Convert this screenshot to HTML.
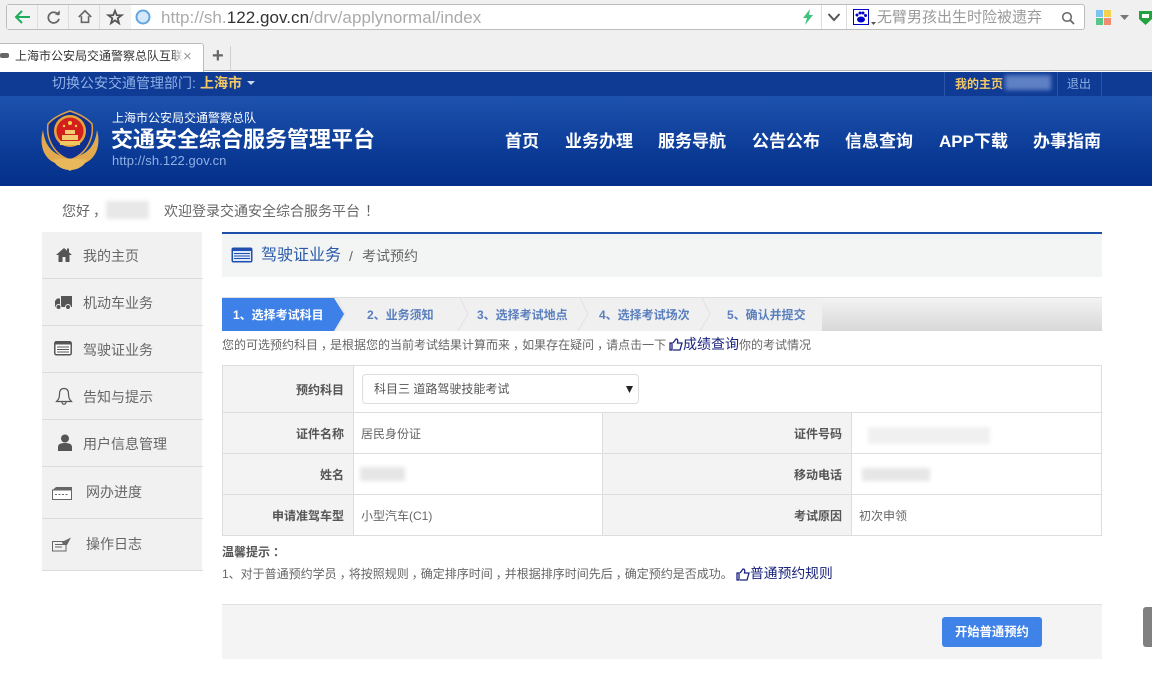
<!DOCTYPE html>
<html lang="zh"><head><meta charset="utf-8"><title>交通安全综合服务管理平台</title>
<style>
html,body{margin:0;padding:0;background:#fff;width:1152px;height:677px;overflow:hidden}
body{position:relative;font-family:"Liberation Sans","Noto Sans CJK SC",sans-serif;font-size:13px;color:#666}
.a{position:absolute;white-space:nowrap;line-height:1}
.b{position:absolute}
.s{position:absolute;left:42px;width:161px;height:1px;background:#dcdcdc}
.h{position:absolute;background:#ddd}
.nav{color:#fff;font-weight:700;font-size:17px;top:133px}
.lab{color:#555;font-weight:700;font-size:12px}
.m{color:#666;font-size:14px}
.st{color:#5a7fbe;font-weight:700;font-size:12px;top:309px}
.blur{position:absolute;background:#e4e4e4;filter:blur(2px)}
.p{font-style:normal;position:relative;left:3px}
svg{position:absolute;overflow:visible}
</style></head><body>

<!-- browser chrome -->
<div class="b" style="left:0;top:0;width:1152px;height:71px;background:#f0f0f0;border-bottom:1px solid #b8b8b8;box-sizing:border-box"></div>
<div class="b" style="left:6px;top:4px;width:1079px;height:26px;background:#fff;border:1px solid #bcbcbc;border-radius:3px;box-sizing:border-box"></div>
<div class="b" style="left:7px;top:5px;width:124px;height:24px;background:#f3f3f3"></div>
<div class="h" style="left:37px;top:5px;width:1px;height:24px"></div>
<div class="h" style="left:68px;top:5px;width:1px;height:24px"></div>
<div class="h" style="left:99px;top:5px;width:1px;height:24px"></div>
<div class="h" style="left:821px;top:5px;width:1px;height:24px"></div>
<div class="h" style="left:846px;top:5px;width:1px;height:24px"></div>
<svg style="left:14px;top:8px" width="18" height="18" viewBox="0 0 18 18"><path d="M2 9H16M8 3L2 9L8 15" fill="none" stroke="#1fae5c" stroke-width="2"/></svg>
<svg style="left:46px;top:9px" width="16" height="16" viewBox="0 0 18 18"><path d="M14 7A6 6 0 1 0 14.500 11" fill="none" stroke="#666" stroke-width="2"/><path d="M10 6.500H15.500V1.500Z" fill="#666"/></svg>
<svg style="left:77px;top:9px" width="16" height="16" viewBox="0 0 18 18"><path d="M2 9L9 2L16 9M5 8V15H13V8" fill="none" stroke="#666" stroke-width="1.800"/></svg>
<svg style="left:107px;top:9px" width="16" height="16" viewBox="0 0 18 18"><path d="M9 2L11 7H16.500L12 10.500L13.500 16L9 12.800L4.500 16L6 10.500L1.500 7H7Z" fill="none" stroke="#555" stroke-width="2"/></svg>
<svg style="left:135px;top:9px" width="16" height="16" viewBox="0 0 16 16"><circle cx="8" cy="8" r="6.500" fill="#d5e9fa" stroke="#62a6e2" stroke-width="2"/></svg>
<div class="a" style="left:161px;top:9px;font-size:17px;letter-spacing:.05px;color:#aaa">http://sh.<span style="color:#333">122.gov.cn</span>/drv/applynormal/index</div>
<svg style="left:801px;top:8px" width="14" height="18" viewBox="0 0 14 18"><path d="M9 1L2 10H6L4 17L12 7H8Z" fill="#3ec47c"/></svg>
<svg style="left:827px;top:12px" width="14" height="10" viewBox="0 0 14 10"><path d="M1.500 2L7 8L12.500 2" fill="none" stroke="#555" stroke-width="2"/></svg>
<svg style="left:853px;top:9px" width="24" height="18" viewBox="0 0 24 18"><rect x=".5" y=".5" width="15" height="15" fill="#fff" stroke="#0000c8"/><ellipse cx="8" cy="10.500" rx="4" ry="3" fill="#0000c8"/><circle cx="4" cy="6" r="1.500" fill="#0000c8"/><circle cx="7" cy="4" r="1.500" fill="#0000c8"/><circle cx="10" cy="4" r="1.500" fill="#0000c8"/><circle cx="12.500" cy="6.500" r="1.500" fill="#0000c8"/><path d="M18 13H23L20.500 16Z" fill="#555"/></svg>
<div class="a" style="left:877px;top:10px;font-size:15px;color:#999">无臂男孩出生时险被遗弃</div>
<svg style="left:1061px;top:11px" width="14" height="14" viewBox="0 0 14 14"><circle cx="6" cy="6" r="4.300" fill="none" stroke="#666" stroke-width="1.500"/><path d="M9 9L13 13" stroke="#666" stroke-width="1.800"/></svg>
<div class="b" style="left:1096px;top:10px;width:7px;height:7px;background:#7cc4ef"></div>
<div class="b" style="left:1104px;top:10px;width:7px;height:7px;background:#f4d04c"></div>
<div class="b" style="left:1096px;top:18px;width:7px;height:7px;background:#58c58a"></div>
<div class="b" style="left:1104px;top:18px;width:7px;height:7px;background:#f08c70"></div>
<svg style="left:1120px;top:15px" width="9" height="5" viewBox="0 0 9 5"><path d="M0 0H9L4.500 5Z" fill="#777"/></svg>
<svg style="left:1139px;top:10px" width="14" height="16" viewBox="0 0 14 16"><path d="M0 1H13V9L6.500 15L0 9Z" fill="#23a23f"/><rect x="3" y="4" width="7" height="4" fill="#fff"/></svg>

<!-- tab -->
<div class="b" style="left:-2px;top:43px;width:206px;height:29px;background:#fff;border:1px solid #bcbcbc;border-bottom:0;border-radius:3px 3px 0 0;box-sizing:border-box"></div>
<div class="b" style="left:0;top:53px;width:9px;height:5px;background:#666;border-radius:2px"></div>
<div class="a" style="left:15px;top:50px;font-size:12px;color:#333;width:168px;overflow:hidden">上海市公安局交通警察总队互联网</div>
<div class="b" style="left:172px;top:46px;width:11px;height:22px;background:linear-gradient(90deg,rgba(255,255,255,0),#fff)"></div>
<div class="a" style="left:183px;top:49px;font-size:15px;color:#999">×</div>
<div class="a" style="left:212px;top:46px;font-size:20px;color:#666;font-weight:700">+</div>
<div class="h" style="left:230px;top:46px;width:1px;height:24px;background:#d0d0d0"></div>

<!-- blue top -->
<div class="b" style="left:0;top:72px;width:1152px;height:24px;background:#0f3b95"></div>
<div class="b" style="left:0;top:96px;width:1152px;height:90px;background:linear-gradient(#1d52ae,#0a3a95 65%,#05308a)"></div>
<div class="a" style="left:52px;top:76px;font-size:14px;color:#8fb0e6">切换公安交通管理部门:</div>
<div class="a" style="left:200px;top:76px;font-size:14px;color:#f4c765;font-weight:700">上海市</div>
<svg style="left:247px;top:81px" width="8" height="4" viewBox="0 0 8 4"><path d="M0 0H8L4 4Z" fill="#c9d8f2"/></svg>
<div class="b" style="left:944px;top:72px;width:1px;height:24px;background:#2b55a8"></div>
<div class="b" style="left:1057px;top:72px;width:1px;height:24px;background:#2b55a8"></div>
<div class="b" style="left:1101px;top:72px;width:1px;height:24px;background:#2b55a8"></div>
<div class="a" style="left:955px;top:78px;font-size:12px;color:#f4c765;font-weight:700">我的主页</div>
<div class="blur" style="left:1005px;top:75px;width:46px;height:15px;background:#5f80c4"></div>
<div class="a" style="left:1067px;top:78px;font-size:12px;color:#8fb0e6">退出</div>

<!-- emblem -->
<svg style="left:41px;top:110px" width="58" height="62" viewBox="0 0 58 62">
<path d="M2 20C-2 34 2 50 17 54L29 61L41 54C56 50 60 34 56 20C54 38 44 46 29 48C14 46 4 38 2 20Z" fill="#e2aa4e"/>
<path d="M29 1C20 4 12 8 7 14C5 28 12 44 29 50C46 44 53 28 51 14C46 8 38 4 29 1Z" fill="#10308f" stroke="#dca14a" stroke-width="1.500"/>
<circle cx="29" cy="21" r="16" fill="#e3a63c"/><circle cx="29" cy="21" r="13.500" fill="#d3201f"/>
<path d="M19 31H39V35H19Z" fill="#f0c760"/><path d="M21 25H37V30H21Z" fill="#f2cd70"/><path d="M24 20H34V24H24Z" fill="#f2cd70"/>
<circle cx="29" cy="13" r="2" fill="#f5d24a"/><circle cx="23" cy="16" r="1.200" fill="#f5d24a"/><circle cx="35" cy="16" r="1.200" fill="#f5d24a"/>
<path d="M12 50C20 48 38 48 46 50C42 58 34 60 29 60C24 60 16 58 12 50Z" fill="#eab85c"/>
</svg>
<div class="a" style="left:112px;top:112px;font-size:12px;color:#fff">上海市公安局交通警察总队</div>
<div class="a" style="left:111px;top:129px;font-size:22px;color:#fff;font-weight:700">交通安全综合服务管理平台</div>
<div class="a" style="left:112px;top:154px;font-size:13px;color:#8fb0e6;letter-spacing:.1px">http://sh.122.gov.cn</div>
<div class="a nav" style="left:505px">首页</div>
<div class="a nav" style="left:565px">业务办理</div>
<div class="a nav" style="left:658px">服务导航</div>
<div class="a nav" style="left:752px">公告公布</div>
<div class="a nav" style="left:845px">信息查询</div>
<div class="a nav" style="left:939px">APP下载</div>
<div class="a nav" style="left:1033px">办事指南</div>

<!-- greeting -->
<div class="a" style="left:62px;top:204px;font-size:14px;color:#666">您好<i class="p">，</i></div>
<div class="blur" style="left:106px;top:201px;width:43px;height:18px;background:#e8e8e8"></div>
<div class="a" style="left:164px;top:204px;font-size:14px;color:#666">欢迎登录交通安全综合服务平台<i class="p" style="left:5px">！</i></div>

<!-- sidebar -->
<div class="b" style="left:42px;top:232px;width:160px;height:338px;background:#f1f1f1"></div>
<div class="s" style="top:278px"></div><div class="s" style="top:325px"></div><div class="s" style="top:372px"></div><div class="s" style="top:419px"></div><div class="s" style="top:466px"></div><div class="s" style="top:518px"></div><div class="s" style="top:570px"></div>
<svg style="left:56px;top:247px" width="16" height="15" viewBox="0 0 16 15"><path d="M8 1L0 8H2.500V15H6.500V10H9.500V15H13.500V8H16L13 5.400V1.500H11V3.600Z" fill="#555"/></svg>
<svg style="left:55px;top:295px" width="18" height="15" viewBox="0 0 18 15"><path d="M6 1H17V12H6ZM0 6L2 3.500H5V12H0Z" fill="#555"/><circle cx="3.500" cy="12" r="2.500" fill="#555" stroke="#f1f1f1"/><circle cx="13" cy="12" r="2.500" fill="#555" stroke="#f1f1f1"/></svg>
<svg style="left:54px;top:341px" width="18" height="15" viewBox="0 0 18 15"><rect x=".8" y=".8" width="16.400" height="13" rx="1.500" fill="#fff" stroke="#555" stroke-width="1.500"/><rect x="1" y="1" width="16" height="2.500" fill="#555"/><path d="M3 6H15M3 8.500H15M3 11H15" stroke="#555"/></svg>
<svg style="left:55px;top:387px" width="18" height="19" viewBox="0 0 18 19"><path d="M9 1.500C5.500 1.500 4.500 4 4.500 7C4.500 11 3.500 12.500 1.500 14.500H16.500C14.500 12.500 13.500 11 13.500 7C13.500 4 12.500 1.500 9 1.500ZM7 15C7 18 11 18 11 15" fill="none" stroke="#555" stroke-width="1.200"/></svg>
<svg style="left:58px;top:434px" width="14" height="17" viewBox="0 0 14 17"><circle cx="7" cy="4.500" r="4" fill="#555"/><path d="M0 17V13C0 10 3 9 7 9C11 9 14 10 14 13V17Z" fill="#555"/></svg>
<svg style="left:52px;top:486px" width="20" height="14" viewBox="0 0 20 14"><rect x=".5" y="4" width="19" height="9.500" fill="#fff" stroke="#666"/><path d="M3 8.500H17" stroke="#666" stroke-dasharray="2 1.500"/><path d="M4 1H20V4.500H0Z" fill="#666"/></svg>
<svg style="left:52px;top:537px" width="20" height="15" viewBox="0 0 20 15"><path d="M.5 4.500H14V14H.5ZM3 7.500H11M3 10H10" fill="none" stroke="#666"/><path d="M10 5L19 .5L15 8L11 8Z" fill="#666"/></svg>
<div class="a m" style="left:83px;top:249px">我的主页</div>
<div class="a m" style="left:83px;top:296px">机动车业务</div>
<div class="a m" style="left:83px;top:343px">驾驶证业务</div>
<div class="a m" style="left:83px;top:390px">告知与提示</div>
<div class="a m" style="left:83px;top:437px">用户信息管理</div>
<div class="a m" style="left:86px;top:485px">网办进度</div>
<div class="a m" style="left:86px;top:537px">操作日志</div>

<!-- title bar -->
<div class="b" style="left:222px;top:232px;width:880px;height:45px;background:#f3f4f4;border-top:2px solid #1c4fa8;box-sizing:border-box"></div>
<svg style="left:231px;top:247px" width="22" height="16" viewBox="0 0 22 16"><rect x=".5" y=".5" width="21" height="15" rx="2" fill="#1f4fb0"/><rect x="2" y="4" width="18" height="10" fill="#dfe8f8"/><path d="M3 6.500H19M3 9H19M3 11.500H19" stroke="#1f4fb0"/></svg>
<div class="a" style="left:261px;top:248px;font-size:16px;color:#2b5aa8">驾驶证业务</div>
<div class="a" style="left:349px;top:249px;font-size:14px;color:#666">/</div>
<div class="a" style="left:362px;top:249px;font-size:14px;color:#666">考试预约</div>

<!-- steps -->
<div class="b" style="left:222px;top:297px;width:880px;height:34px;background:#f0f0f0;border-top:1px solid #ddd;box-sizing:border-box"></div>
<div class="b" style="left:822px;top:298px;width:280px;height:33px;background:linear-gradient(#f3f3f3,#d8d8d8)"></div>
<svg style="left:222px;top:298px" width="880" height="33" viewBox="0 0 880 33">
<path d="M115 0L123 16L113 33M238 0L246 16L236 33M358 0L366 16L356 33M480 0L488 16L478 33" fill="none" stroke="#e6e6e6" stroke-width="1.500"/>
<path d="M590 0L601 16L590 33H600V0Z" fill="#f0f0f0"/>
<path d="M0 0H112L122 16L112 33H0Z" fill="#3d80e8"/>
</svg>
<div class="a" style="left:233px;top:309px;font-size:12px;font-weight:700;color:#fff">1、选择考试科目</div>
<div class="a st" style="left:367px">2、业务须知</div>
<div class="a st" style="left:477px">3、选择考试地点</div>
<div class="a st" style="left:599px">4、选择考试场次</div>
<div class="a st" style="left:727px">5、确认并提交</div>

<div class="a" style="left:222px;top:339px;font-size:12px;color:#666">您的可选预约科目<i class="p">，</i>是根据您的当前考试结果计算而来<i class="p">，</i>如果存在疑问<i class="p">，</i>请点击一下</div>
<svg style="left:669px;top:338px" width="14" height="13" viewBox="0 0 14 13"><path d="M1 5H3V12H1ZM4 5L7 1C9 1 9 3 8.500 5H13L11 12H4" fill="none" stroke="#1a237e" stroke-width="1.300"/></svg>
<div class="a" style="left:683px;top:337px;font-size:14px;color:#1a237e">成绩查询</div>
<div class="a" style="left:739px;top:339px;font-size:12px;color:#666">你的考试情况</div>

<!-- table -->
<div class="b" style="left:222px;top:365px;width:880px;height:171px;border:1px solid #ddd;box-sizing:border-box"></div>
<div class="b" style="left:223px;top:366px;width:130px;height:169px;background:#f3f3f3"></div>
<div class="b" style="left:603px;top:413px;width:248px;height:122px;background:#f3f3f3"></div>
<div class="h" style="left:222px;top:412px;width:880px;height:1px"></div>
<div class="h" style="left:222px;top:453px;width:880px;height:1px"></div>
<div class="h" style="left:222px;top:494px;width:880px;height:1px"></div>
<div class="h" style="left:353px;top:365px;width:1px;height:171px"></div>
<div class="h" style="left:602px;top:412px;width:1px;height:124px"></div>
<div class="h" style="left:851px;top:412px;width:1px;height:124px"></div>
<div class="a lab" style="right:808px;top:384px">预约科目</div>
<div class="a lab" style="right:808px;top:428px">证件名称</div>
<div class="a lab" style="right:808px;top:469px">姓名</div>
<div class="a lab" style="right:808px;top:510px">申请准驾车型</div>
<div class="a lab" style="right:310px;top:428px">证件号码</div>
<div class="a lab" style="right:310px;top:469px">移动电话</div>
<div class="a lab" style="right:310px;top:510px">考试原因</div>
<div class="b" style="left:362px;top:374px;width:277px;height:30px;background:#fff;border:1px solid #ddd;border-radius:4px;box-sizing:border-box"></div>
<div class="a" style="left:374px;top:383px;font-size:12px;color:#555">科目三 道路驾驶技能考试</div>
<svg style="left:626px;top:386px" width="7" height="7" viewBox="0 0 7 7"><path d="M0 0H7L3.500 7Z" fill="#222"/></svg>
<div class="a" style="left:361px;top:428px;font-size:12px;color:#666">居民身份证</div>
<div class="a" style="left:361px;top:510px;font-size:12px;color:#666">小型汽车(C1)</div>
<div class="a" style="left:859px;top:510px;font-size:12px;color:#666">初次申领</div>
<div class="blur" style="left:868px;top:427px;width:122px;height:17px;background:#f0f0f0"></div>
<div class="blur" style="left:360px;top:467px;width:45px;height:14px;background:#e6e6e6"></div>
<div class="blur" style="left:862px;top:468px;width:68px;height:13px;background:#e6e6e6"></div>

<!-- hints -->
<div class="a" style="left:222px;top:546px;font-size:12px;font-weight:700;color:#555">温馨提示<i class="p">：</i></div>
<div class="a" style="left:222px;top:568px;font-size:12px;color:#666">1、对于普通预约学员<i class="p">，</i>将按照规则<i class="p">，</i>确定排序时间<i class="p">，</i>并根据排序时间先后<i class="p">，</i>确定预约是否成功。</div>
<svg style="left:736px;top:568px" width="14" height="13" viewBox="0 0 14 13"><path d="M1 5H3V12H1ZM4 5L7 1C9 1 9 3 8.500 5H13L11 12H4" fill="none" stroke="#1a237e" stroke-width="1.300"/></svg>
<div class="a" style="left:750px;top:567px;font-size:13.800px;color:#1a237e">普通预约规则</div>

<!-- footer bar -->
<div class="b" style="left:222px;top:604px;width:880px;height:55px;background:#f4f4f4;border-top:1px solid #e0e0e0;box-sizing:border-box"></div>
<div class="b" style="left:942px;top:617px;width:100px;height:30px;background:#3f82e8;border-radius:3px"></div>
<div class="a" style="left:955px;top:626px;font-size:12.300px;font-weight:700;color:#fff">开始普通预约</div>
<div class="b" style="left:1143px;top:607px;width:12px;height:40px;background:#808080;border-radius:3px"></div>
</body></html>
